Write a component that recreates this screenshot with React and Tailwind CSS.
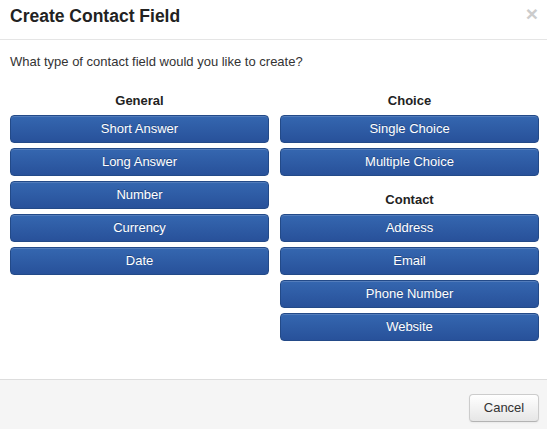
import React from "react"

const general = ["Short Answer", "Long Answer", "Number", "Currency", "Date"]
const choice = ["Single Choice", "Multiple Choice"]
const contact = ["Address", "Email", "Phone Number", "Website"]

function FieldButton({ label }) {
  return (
    <button
      type="button"
      className="mb-[5px] block h-[28px] w-full rounded-[4px] border border-[#234a88] bg-gradient-to-b from-[#3567b0] to-[#28519a] text-center text-[13px] leading-[26px] text-white shadow-[inset_0_1px_0_rgba(255,255,255,0.15)] [text-shadow:0_-1px_0_rgba(0,0,0,0.25)]"
    >
      {label}
    </button>
  )
}

function Heading({ children, className = "" }) {
  return (
    <h4 className={"mb-[5px] h-[18px] text-center text-[13px] font-bold leading-[18px] text-[#222] " + className}>
      {children}
    </h4>
  )
}

export default function App() {
  return (
    <div className="flex h-[429px] w-[547px] flex-col bg-white font-['Liberation_Sans',Arial,sans-serif] text-[#333]">
      <div className="flex h-[40px] shrink-0 items-start justify-between border-b border-[#e5e5e5] pl-[10px] pr-[9px] pt-[6px]">
        <h3 className="h-[20px] text-[17.5px] font-bold leading-[20px] text-[#222]">Create Contact Field</h3>
        <span className="-mt-[2px] h-[20px] text-[21px] font-bold leading-[20px] text-[#cccccc]">×</span>
      </div>

      <div className="flex-1 pl-[10px] pr-[8px] pt-[13px]">
        <p className="h-[18px] text-[13px] leading-[18px]">What type of contact field would you like to create?</p>
        <div className="mt-[21px] grid grid-cols-[259px_259px] gap-x-[11px]">
          <div className="flex flex-col">
            <Heading>General</Heading>
            {general.map((g) => (
              <FieldButton key={g} label={g} />
            ))}
          </div>
          <div className="flex flex-col">
            <Heading>Choice</Heading>
            {choice.map((c) => (
              <FieldButton key={c} label={c} />
            ))}
            <Heading className="mt-[10px]">Contact</Heading>
            {contact.map((c) => (
              <FieldButton key={c} label={c} />
            ))}
          </div>
        </div>
      </div>

      <div className="flex h-[50px] shrink-0 justify-end border-t border-[#dddddd] bg-[#f5f5f5] pr-[8px] pt-[14px]">
        <button
          type="button"
          className="h-[28px] w-[70px] rounded-[4px] border border-[#cccccc] border-b-[#b3b3b3] bg-gradient-to-b from-white to-[#e6e6e6] text-[13px] leading-[26px] text-[#333] shadow-[inset_0_1px_0_rgba(255,255,255,0.2),0_1px_2px_rgba(0,0,0,0.05)]"
        >
          Cancel
        </button>
      </div>
    </div>
  )
}
